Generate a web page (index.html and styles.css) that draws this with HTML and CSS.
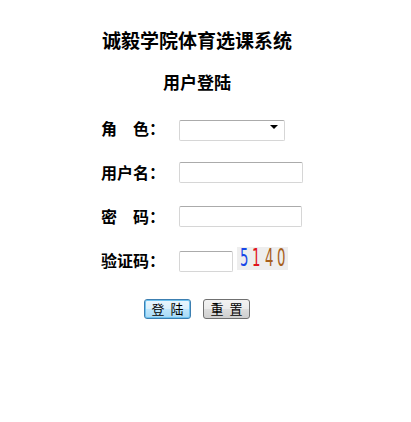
FILE: index.html
```html
<!DOCTYPE html>
<html lang="zh-CN">
<head>
    <meta charset="UTF-8">
    <title>用户登陆</title>
    <link rel="stylesheet" href="styles.css">
</head>
<body>
    <div class="page">
        <h1>诚毅学院体育选课系统</h1>
        <h2>用户登陆</h2>

        <form class="login">
            <label for="role">角　色：</label>
            <span class="select-wrap">
                <select id="role">
                    <option value=""></option>
                    <option value="student">学生</option>
                    <option value="teacher">教师</option>
                    <option value="admin">管理员</option>
                </select>
            </span>

            <label for="username">用户名：</label>
            <input type="text" id="username" class="text">

            <label for="password">密　码：</label>
            <input type="password" id="password" class="text pwd">

            <label for="code">验证码：</label>
            <div class="code-row">
                <input type="text" id="code" class="text code">
                <span class="captcha">
                    <span class="d1">5</span><span class="d2">1</span><span class="d3">4</span><span class="d3">0</span>
                </span>
            </div>
        </form>

        <div class="buttons">
            <button type="button" class="btn active">登&nbsp;&nbsp;陆</button>
            <button type="button" class="btn">重&nbsp;&nbsp;置</button>
        </div>
    </div>
</body>
</html>
```

FILE: styles.css
```css
body {
    margin: 0;
    font-family: "Noto Sans CJK SC", sans-serif;
    color: #000;
    background: #fff;
}
.page {
    width: 394px;
    text-align: center;
}
h1 {
    font-size: 19px;
    font-weight: bold;
    margin: 0;
    padding-top: 29px;
    line-height: 22px;
}
h2 {
    font-size: 17px;
    font-weight: bold;
    margin: 0;
    padding-top: 20px;
    line-height: 22px;
}
.login {
    display: grid;
    grid-template-columns: 78px auto;
    grid-auto-rows: 21px;
    row-gap: 23px;
    align-items: center;
    justify-items: start;
    text-align: left;
    padding-left: 101px;
    margin-top: 25px;
}
.login label {
    font-size: 16px;
    font-weight: bold;
    line-height: 21px;
    white-space: nowrap;
}
.select-wrap {
    position: relative;
    display: inline-block;
}
.select-wrap::after {
    content: "";
    position: absolute;
    right: 7px;
    top: 9px;
    border-left: 4px solid transparent;
    border-right: 4px solid transparent;
    border-top: 4px solid #000;
    pointer-events: none;
}
select {
    -webkit-appearance: none;
    appearance: none;
    width: 106px;
    height: 21px;
    box-sizing: border-box;
    border: 1px solid #d6d6d6;
    border-top-color: #ababab;
    border-radius: 2px;
    background: #fff;
    font-size: 13px;
}
.text {
    height: 21px;
    box-sizing: border-box;
    border: 1px solid #d6d6d6;
    border-top-color: #ababab;
    border-radius: 2px;
    padding: 0 3px;
    width: 124px;
    font-size: 13px;
    margin: 0;
}
.pwd {
    width: 123px;
}
.code-row {
    display: flex;
    align-items: center;
    gap: 4px;
}
.text.code {
    width: 54px;
    margin-top: 1px;
}
.captcha {
    display: flex;
    align-items: center;
    justify-content: center;
    width: 51px;
    height: 23px;
    margin-top: -5px;
    background: #eeeeee;
    font-family: "DejaVu Sans Condensed", sans-serif;
    font-size: 21px;
    line-height: 23px;
}
.captcha span {
    display: inline-block;
    transform: scale(0.7, 1.2);
    width: 12.5px;
    text-align: center;
}
.d1 {
    color: #1848e8;
}
.d2 {
    color: #e0141c;
}
.d3 {
    color: #a8601c;
}
.buttons {
    display: flex;
    justify-content: center;
    gap: 12px;
    margin-top: 28px;
}
.btn {
    width: 47px;
    height: 20px;
    padding: 0;
    font-family: "Noto Sans CJK SC", sans-serif;
    font-size: 13px;
    line-height: 16px;
    border: 1px solid #707070;
    border-radius: 3px;
    background: linear-gradient(#f2f2f2, #ebebeb 50%, #dddddd 51%, #cfcfcf);
    color: #000;
}
.btn.active {
    border: 1px solid #3c7fb1;
    box-shadow: inset 0 0 0 1px #6fc3f0;
    background: linear-gradient(#eaf6fd, #d9f0fc 50%, #bee6fd 51%, #a7d9f5);
}
```
